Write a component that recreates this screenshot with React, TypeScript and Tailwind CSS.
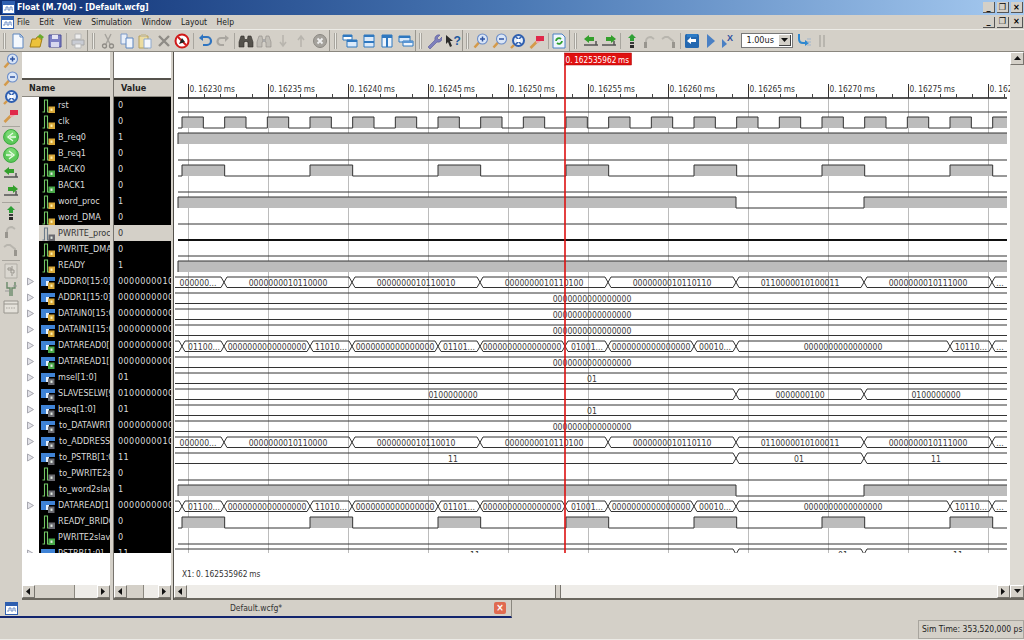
import React from "react";

const FONT = "font-['DejaVu_Sans_Condensed','DejaVu_Sans',sans-serif]";

type IconName = string;

function Icon({ n, dim }: { n: IconName; dim?: boolean }) {
  const c = { className: "w-4 h-4 shrink-0", viewBox: "0 0 16 16", fill: "none" } as const;
  switch (n) {
    case "new":
      return <svg {...c}><path d="M3 1h7l3 3v11H3z" fill="#f4f8fd" stroke="#5d86c0" /><path d="M10 1v3h3" stroke="#5d86c0" /></svg>;
    case "open":
      return <svg {...c}><path d="M1 14l2-8h4l1-2h3v2h2l-2 8z" fill="#ecc23c" stroke="#a37d14" /><path d="M8 4l3-3 4 3-3 3V5z" fill="#6aaa2c" /></svg>;
    case "save":
      return <svg {...c}><path d="M2 2h12v12H2z" fill="#7d80c4" stroke="#4a4d98" /><path d="M5 2h6v4H5z" fill="#e4e4f4" /><path d="M4 9h8v5H4z" fill="#d8d8ee" /></svg>;
    case "print":
      return <svg {...c}><path d="M5 1h6v5H5z" fill="#eee" stroke="#b8b8b8" /><path d="M2 7h12v5H2z" fill="#c9ccd4" stroke="#a8a8a8" /><path d="M5 11h6v4H5z" fill="#f2f2f2" stroke="#bbb" /></svg>;
    case "cut":
      return <svg {...c}><path d="M5 1l5 10M11 1L6 11" stroke="#a5a29c" strokeWidth="1.4" /><circle cx="4.5" cy="13" r="2" stroke="#8f8c86" strokeWidth="1.3" /><circle cx="11.5" cy="13" r="2" stroke="#8f8c86" strokeWidth="1.3" /></svg>;
    case "copy":
      return <svg {...c}><path d="M2 1h6v10H2z" fill="#e8eef8" stroke="#7c9ac8" /><path d="M7 5h7v10H7z" fill="#f2f6fc" stroke="#5d86c0" /></svg>;
    case "paste":
      return <svg {...c}><path d="M2 3h9v12H2z" fill="#ecdca0" stroke="#b59f5c" /><path d="M7 6h7v9H7z" fill="#f4f7fc" stroke="#8ea8cc" /><path d="M4 1h5v3H4z" fill="#c9c0a0" /></svg>;
    case "del":
      return <svg {...c}><path d="M3 3l10 10M13 3L3 13" stroke="#8f8c86" strokeWidth="2.4" /></svg>;
    case "stop":
      return <svg {...c}><circle cx="8" cy="8" r="6.5" fill="#fff" stroke="#d01a1a" strokeWidth="2" /><path d="M4 4l8 8" stroke="#d01a1a" strokeWidth="2" /><path d="M5 11l3-6 3 4z" fill="#222" /></svg>;
    case "undo":
      return <svg {...c}><path d="M5 4h5a3.5 3.5 0 010 8H6" stroke="#2f74c0" strokeWidth="2.2" /><path d="M6 1L2 5l4 3z" fill="#2f74c0" /></svg>;
    case "redo":
      return <svg {...c}><path d="M11 5H6a3.5 3.5 0 000 7h3" stroke="#a9a6a0" strokeWidth="2.2" /><path d="M10 2l4 3-4 4z" fill="#a9a6a0" /></svg>;
    case "bino":
      return <svg {...c}><path d="M3 3h3l1 6H6v5H1V9zM10 3h3l2 6v5h-5V9H9z" fill={dim ? "#c0bdb6" : "#55524c"} stroke={dim ? "#8f8c86" : "#33312d"} strokeWidth=".6" /><path d="M7 6h2v3H7z" fill={dim ? "#aaa" : "#55524c"} /></svg>;
    case "down":
      return <svg {...c}><path d="M8 2v10M5 9l3 4 3-4" stroke="#b8b5ae" strokeWidth="1.6" /></svg>;
    case "up":
      return <svg {...c}><path d="M8 14V4M5 7l3-4 3 4" stroke="#b8b5ae" strokeWidth="1.6" /></svg>;
    case "cx":
      return <svg {...c}><circle cx="8" cy="8" r="6.5" fill="#a5a29c" stroke="#8c8983" /><path d="M5.5 5.5l5 5M10.5 5.5l-5 5" stroke="#eee" strokeWidth="1.8" /></svg>;
    case "w1":
      return <svg {...c}><path d="M1 2h9v5H1z" fill="#fff" stroke="#2f78c0" /><path d="M1 2h9v2H1z" fill="#2f78c0" /><path d="M5 7h10v7H5z" fill="#dbeafa" stroke="#2f78c0" /><path d="M5 7h10v2H5z" fill="#2f78c0" /></svg>;
    case "w2":
      return <svg {...c}><path d="M3 2h10v12H3z" fill="#dbeafa" stroke="#2f78c0" /><path d="M3 2h10v2H3zM3 8h10v2H3z" fill="#2f78c0" /></svg>;
    case "w3":
      return <svg {...c}><path d="M3 2h10v12H3z" fill="#eef5fd" stroke="#2f78c0" /><path d="M3 2h10v3H3z" fill="#2f78c0" /><path d="M7 5h2v9H7z" fill="#2f78c0" /></svg>;
    case "w4":
      return <svg {...c}><path d="M1 3h11v6H1z" fill="#dbeafa" stroke="#2f78c0" /><path d="M1 3h11v2H1z" fill="#2f78c0" /><path d="M5 8h10v5H5z" fill="#eef5fd" stroke="#2f78c0" /><path d="M5 8h10v2H5z" fill="#5a96d4" /></svg>;
    case "wrench":
      return <svg {...c}><path d="M2 14l7-7a4 4 0 015-5l-3 3 2 2 3-3a4 4 0 01-5 5l-7 7z" fill="#7d7fbc" stroke="#565898" strokeWidth=".6" /></svg>;
    case "help":
      return <svg {...c}><path d="M1 2l7 6H5l2 5-2 1-2-5-2 2z" fill="#2a2a2a" /><text x="8.5" y="12" fontSize="12" fontWeight="700" fill="#1e5aa0" fontFamily="Liberation Sans">?</text></svg>;
    case "zin":
    case "zout":
      return <svg {...c}><path d="M1.5 14.5l4.5-5" stroke="#d49a4a" strokeWidth="2.6" /><circle cx="9.5" cy="6" r="5" fill="#dbe6f6" stroke="#6a8cc8" strokeWidth="1.1" /><path d="M7 6h5" stroke="#2f55a4" strokeWidth="1.5" />{n === "zin" && <path d="M9.5 3.5v5" stroke="#2f55a4" strokeWidth="1.5" />}</svg>;
    case "fit":
      return <svg {...c}><path d="M1 15l3-3" stroke="#d49a4a" strokeWidth="2.4" /><circle cx="8.5" cy="7.5" r="5.5" fill="#e4eefa" stroke="#2f5fb0" strokeWidth="2" /><path d="M5 3l3 3M12 3L9 6M5 12l3-3M12 12L9 9" stroke="#2f5fb0" strokeWidth="1.5" /><rect x="7" y="6" width="3" height="3" fill="#fff" /></svg>;
    case "mark":
      return <svg {...c}><path d="M1.5 15l6-6" stroke="#d49a4a" strokeWidth="2.6" /><path d="M7 3h8v5H7z" fill="#e0284a" /><path d="M7 8h5l-3 2H7z" fill="#f0a0a8" /></svg>;
    case "refresh":
      return <svg {...c}><path d="M2 1h9l3 3v11H2z" fill="#eef5fd" stroke="#4a82c4" /><path d="M5 8a3 3 0 015-2M11 8a3 3 0 01-5 2" stroke="#2fa02f" strokeWidth="1.8" /></svg>;
    case "gl":
    case "gr":
      return <svg {...c}>{n === "gl" ? <path d="M6 2L1 6l5 4V8h5V4H6z" fill="#34a02c" /> : <path d="M10 2l5 4-5 4V8H5V4h5z" fill="#34a02c" />}<path d="M1 12h14" stroke="#555" strokeWidth="1.5" /><path d="M13 8v4" stroke="#555" strokeWidth="1.5" /></svg>;
    case "pin":
      return <svg {...c}><path d="M8 1l4 4H10v3H6V5H4z" fill="#2fa036" /><path d="M6 9h4v2H6z" fill="#3a3a3a" /><path d="M6 12h4v3H6z" fill="#2a2a2a" /></svg>;
    case "a1":
      return <svg {...c}><path d="M4 15V8c0-3 3-4 5-4l3 2" stroke="#b8b5ae" strokeWidth="2" /><path d="M2 9h3v6H2z" fill="#98958e" /></svg>;
    case "a2":
      return <svg {...c}><path d="M1 6l3-2h3l5 4v3" stroke="#b8b5ae" strokeWidth="2" /><path d="M11 9h3v6h-3z" fill="#98958e" /></svg>;
    case "back":
      return <svg {...c}><rect x="1" y="1" width="14" height="14" rx="1.5" fill="#2468b0" /><path d="M3 1h10v3H3z" fill="#2c7cc8" /><path d="M7 4L3 8l4 3V9h5V6H7z" fill="#fff" /></svg>;
    case "play":
      return <svg {...c}><path d="M4 1l8 7-8 7z" fill="#4a80c4" /></svg>;
    case "playx":
      return <svg {...c}><path d="M1 6l5 5-5 4z" fill="#4a80c4" /><text x="6" y="8" fontSize="9" fontWeight="700" fill="#2f4fa0" fontFamily="Liberation Sans">X</text></svg>;
    case "redoB":
      return <svg {...c}><path d="M3 1v5c0 3 2 4 4 4h2" stroke="#2f88d0" strokeWidth="2" /><path d="M9 7l4 3-4 3z" fill="#2f88d0" /><path d="M11 6h4M11 9h4M11 12h4" stroke="#9fb4cc" /></svg>;
    case "pause":
      return <svg {...c}><path d="M5 2h2v12H5zM9 2h2v12H9z" fill="#b8b5ae" /></svg>;
    case "green1":
    case "green2":
      return <svg {...c}><circle cx="8" cy="8" r="7.4" fill="#5cc85a" stroke="#3aa83c" /><circle cx="8" cy="6" r="5" fill="#8ce282" opacity=".6" />{n === "green1" ? <path d="M10 4L5 8l5 4M13 8H7" stroke="#eafbe6" strokeWidth="1.3" /> : <path d="M6 4l5 4-5 4M3 8h6" stroke="#eafbe6" strokeWidth="1.3" />}</svg>;
    case "s1":
      return <svg {...c}><path d="M2 1h12v14H2z" fill="#dad7d0" stroke="#b0ada6" /><path d="M5 5h3v2H5zM8 7h3v3H8z" stroke="#98958e" /><path d="M9 3v4M9 11v2" stroke="#98958e" /></svg>;
    case "s2":
      return <svg {...c}><path d="M4 1v6h3v8M12 1v6H9v8" stroke="#6a8a6a" strokeWidth="1.4" /><path d="M2 10h4M10 5h4" stroke="#999" /></svg>;
    case "s3":
      return <svg {...c}><path d="M1 2h14v12H1z" fill="#e4e1da" stroke="#98958e" /><path d="M1 5h14" stroke="#98958e" /><path d="M3 9h10" stroke="#a8a59e" strokeDasharray="1.5 1" /></svg>;
    default:
      return <svg {...c} />;
  }
}

function Grip({ w }: { w: string }) {
  return (
    <div className={`flex items-center justify-center h-full border-l border-[#9a978f] ${w}`}>
      <div className="h-4 w-[3px] bg-[#ecebe6] border-x border-[#a8a59e]" />
    </div>
  );
}

function Sep({ w = "w-1" }: { w?: string }) {
  return (
    <div className={`flex justify-center ${w}`}>
      <div className="h-4 w-px bg-[#a8a59e]" />
    </div>
  );
}

function T({ n, dim }: { n: string; dim?: boolean }) {
  return (
    <div className="w-[18.5px] h-4 flex items-center justify-center shrink-0">
      <Icon n={n} dim={dim} />
    </div>
  );
}

function WinBtns() {
  return (
    <div className="flex gap-[2px]">
      {["_", "❐", "×"].map((g, i) => (
        <div key={i} className="w-[12px] h-[11px] bg-[#d4d0c8] border-r border-b border-[#555] flex items-center justify-center text-[9px] leading-none font-bold text-black">
          {g}
        </div>
      ))}
    </div>
  );
}

function AppGlyph() {
  return (
    <svg className="w-[13px] h-[13px] shrink-0" viewBox="0 0 13 13">
      <rect x=".5" y=".5" width="12" height="12" fill="#fff" stroke="#2f5fb0" />
      <rect x="1" y="1" width="11" height="3" fill="#2f5fb0" />
      <path d="M2 9h2V6h2v3h2V6h2v3h1" fill="none" stroke="#6f8fc8" />
    </svg>
  );
}

type Row = { name: string; value: string; bus?: boolean; badge: "y" | "g" | "c"; sel?: boolean; narrow?: boolean };

const ROWS: Row[] = [
  { name: "rst", value: "0", badge: "y" },
  { name: "clk", value: "0", badge: "y" },
  { name: "B_req0", value: "1", badge: "y" },
  { name: "B_req1", value: "0", badge: "y" },
  { name: "BACK0", value: "0", badge: "g" },
  { name: "BACK1", value: "0", badge: "g" },
  { name: "word_proc", value: "1", badge: "y" },
  { name: "word_DMA", value: "0", badge: "y" },
  { name: "PWRITE_proc", value: "0", badge: "c", sel: true },
  { name: "PWRITE_DMA", value: "0", badge: "y" },
  { name: "READY", value: "1", badge: "y" },
  { name: "ADDR0[15:0]", value: "0000000010110", bus: true, badge: "y" },
  { name: "ADDR1[15:0]", value: "0000000000000", bus: true, badge: "y" },
  { name: "DATAIN0[15:0]", value: "0000000000000", bus: true, badge: "y" },
  { name: "DATAIN1[15:0]", value: "0000000000000", bus: true, badge: "y" },
  { name: "DATAREAD0[15:0]", value: "0000000000000", bus: true, badge: "g" },
  { name: "DATAREAD1[15:0]", value: "0000000000000", bus: true, badge: "g" },
  { name: "msel[1:0]", value: "01", bus: true, badge: "c" },
  { name: "SLAVESELW[9:0]", value: "0100000000", bus: true, badge: "c" },
  { name: "breq[1:0]", value: "01", bus: true, badge: "c" },
  { name: "to_DATAWRITE[15:0]", value: "0000000000000", bus: true, badge: "c", narrow: true },
  { name: "to_ADDRESS[15:0]", value: "0000000010110", bus: true, badge: "c", narrow: true },
  { name: "to_PSTRB[1:0]", value: "11", bus: true, badge: "c", narrow: true },
  { name: "to_PWRITE2slave", value: "0", badge: "c", narrow: true },
  { name: "to_word2slave", value: "1", badge: "c", narrow: true },
  { name: "DATAREAD[15:0]", value: "0000000000000", bus: true, badge: "c" },
  { name: "READY_BRIDGE", value: "0", badge: "c" },
  { name: "PWRITE2slave", value: "0", badge: "g" },
  { name: "PSTRB[1:0]", value: "11", bus: true, badge: "c" },
];

function SigIcon({ bus, badge, sel }: { bus?: boolean; badge: Row["badge"]; sel?: boolean }) {
  const fill = badge === "y" ? "#d8a838" : badge === "g" ? "#48a848" : "#6a6a70";
  return (
    <svg className="w-[14px] h-[14px] shrink-0" viewBox="0 0 14 14">
      {bus ? (
        <>
          <path d="M0 2h5v9H0z" fill="#3f83d6" />
          <path d="M5 2h9v4H5z" fill="#3f83d6" />
          <path d="M5 6h3v5H5z" fill="#e8f2fc" />
        </>
      ) : (
        <path d="M1.5 13h2V1h3v12h2" fill="none" stroke={sel ? "#6a7a8a" : "#74c866"} strokeWidth="1.1" />
      )}
      <rect x={bus ? 7 : 7.5} y="7.5" width="6.5" height="6.5" fill={fill} />
      <rect x="9.5" y="9.5" width="2" height="2.4" fill={badge === "y" ? "#fff0b0" : "#dfe8df"} />
    </svg>
  );
}

function Tri({ dir }: { dir: "l" | "r" | "u" | "d" }) {
  const d = { l: "M6 1L2 4.5 6 8z", r: "M2 1l4 3.5L2 8z", u: "M1 6l3.5-4L8 6z", d: "M1 2l3.5 4L8 2z" }[dir];
  return (
    <svg className="w-[9px] h-[9px]" viewBox="0 0 9 9">
      <path d={d} fill="#111" />
    </svg>
  );
}

function SBtn({ dir, cls = "w-[13px]" }: { dir: "l" | "r" | "u" | "d"; cls?: string }) {
  return (
    <div className={`shrink-0 h-[13px] bg-[#d4d0c8] border-r border-b border-[#77746e] border-t-white border-l-white border-t border-l flex items-center justify-center ${cls}`}>
      <Tri dir={dir} />
    </div>
  );
}

function HScroll({ thumb }: { thumb: string }) {
  return (
    <div className="flex h-[13px] shrink-0 bg-[#eeece8]">
      <SBtn dir="l" />
      <div className={`h-[13px] bg-[#d4d0c8] border-r border-[#8a877f] ${thumb}`} />
      <div className="flex-1" />
      <SBtn dir="r" />
    </div>
  );
}

function Column({ w, title, titleCls, children }: { w: string; title: string; titleCls: string; children: React.ReactNode }) {
  return (
    <div className={`flex flex-col shrink-0 ${w}`}>
      <div className="h-[26px] bg-white" />
      <div className="h-[2px] bg-[#55524c]" />
      <div className={`h-[17px] pt-[1px] bg-[#d4d0c8] font-bold text-[9px] flex items-center text-[#222] border-b border-[#8a877f] ${titleCls}`}>{title}</div>
      <div className="h-[456px] overflow-hidden bg-white">{children}</div>
      <div className="h-[32px] bg-white" />
      <HScroll thumb={w === "w-[88px]" ? "w-[40px]" : "w-[17px]"} />
      <div className="h-[2px] bg-[#6a675f]" />
    </div>
  );
}

const P = 42.667;
const T0 = 182;
const GRID = Array.from({ length: 11 }, (_, i) => 188 + i * 80);
const X0 = 178;
const X1 = 1007;
const LINE = "#333";
const GRAY = "#bcbcbc";
const BACK = [0, 3, 6, 9, 12, 15, 18].map((k) => T0 + k * P);
const MONO = { fontFamily: "'DejaVu Sans Condensed','DejaVu Sans',sans-serif" };
const LABEL = { ...MONO, wordSpacing: "-0.7px" };

function Bit({ r, spans }: { r: number; spans: [number, number][] }) {
  const hi = 101 + r * 16;
  const lo = 112 + r * 16;
  let last = X0;
  let path = `M${X0} ${lo}`;
  spans.forEach(([a, b]) => {
    path += `H${a}V${hi}H${b}`;
    if (b < X1) path += `V${lo}`;
    last = b;
  });
  if (last < X1) path += `H${X1}`;
  return (
    <g>
      {spans.map(([a, b], i) => (
        <rect key={i} x={a} y={hi} width={b - a} height={lo - hi} fill={GRAY} />
      ))}
      <path d={path} fill="none" stroke={LINE} strokeWidth="1" />
    </g>
  );
}

function Bus({ r, cuts, labels }: { r: number; cuts: number[]; labels: { t: string; x: number }[] }) {
  const hi = 101 + r * 16;
  const lo = 111.5 + r * 16;
  const edges = [X0 - 6, ...cuts, X1 + 6];
  let d = "";
  for (let i = 0; i < edges.length - 1; i++) {
    const a = edges[i] + 3;
    const b = edges[i + 1] - 3;
    d += `M${a} ${hi}H${b}M${a} ${lo}H${b}`;
  }
  cuts.forEach((c) => {
    d += `M${c - 3} ${hi}L${c + 3} ${lo}M${c - 3} ${lo}L${c + 3} ${hi}`;
  });
  return (
    <g>
      <path d={d} fill="none" stroke={LINE} strokeWidth="1" />
      {labels.map((l, i) => (
        <text key={i} x={l.x} y={hi + 8.5} textAnchor="middle" fontSize="8.6" fill="#3a3a3a" style={MONO}>
          {l.t}
        </text>
      ))}
    </g>
  );
}

const Z16 = "0000000000000000";
const ADDR_CUTS = [224, 352, 480, 608, 736, 864, 992];
const ADDR_LABELS = [
  { t: "000000...", x: 198 },
  { t: "0000000010110000", x: 288 },
  { t: "0000000010110010", x: 416 },
  { t: "0000000010110100", x: 544 },
  { t: "0000000010110110", x: 672 },
  { t: "0110000010100011", x: 800 },
  { t: "0000000010111000", x: 928 },
  { t: "...", x: 1000 },
];
const READ_CUTS = [182, 224, 310, 352, 438, 480, 565, 608, 694, 736, 950, 992];
const READ_LABELS = [
  { t: "01100...", x: 204 },
  { t: Z16, x: 267 },
  { t: "11010...", x: 331 },
  { t: Z16, x: 395 },
  { t: "01101...", x: 459 },
  { t: Z16, x: 522 },
  { t: "01001...", x: 587 },
  { t: Z16, x: 651 },
  { t: "00010...", x: 715 },
  { t: Z16, x: 843 },
  { t: "10110...", x: 971 },
  { t: "...", x: 1000 },
];
const Mid = (r: number, t: string) => <Bus r={r} cuts={[]} labels={[{ t, x: 592 }]} />;
const backSpans: [number, number][] = BACK.map((b) => [b, b + P]);
const clkSpans: [number, number][] = Array.from({ length: 20 }, (_, k) => [T0 + k * P, Math.min(T0 + k * P + P / 2, X1)] as [number, number]);

function Wave() {
  const ticks = Array.from({ length: 52 }, (_, i) => 188 + i * 16).filter((x) => x < X1);
  return (
    <svg className="w-full h-[533px] block bg-white" viewBox="174 52 836 533">
      <defs>
        <clipPath id="rowsClip">
          <rect x="174" y="97" width="833" height="456" />
        </clipPath>
      </defs>
      <g clipPath="url(#rowsClip)">
        {GRID.map((x) => (
          <path key={x} d={`M${x + 0.5} 98V553`} stroke="#bcbcbc" />
        ))}
        <Bit r={0} spans={[]} />
        <Bit r={1} spans={clkSpans} />
        <Bit r={2} spans={[[X0, X1]]} />
        <Bit r={3} spans={[]} />
        <Bit r={4} spans={backSpans} />
        <Bit r={5} spans={[]} />
        <Bit r={6} spans={[[X0, 736], [864, X1]]} />
        <Bit r={7} spans={[]} />
        <path d={`M${X0} 240H${X1}`} stroke="#111" strokeWidth="2" />
        <Bit r={9} spans={[]} />
        <Bit r={10} spans={[[X0, X1]]} />
        <Bus r={11} cuts={ADDR_CUTS} labels={ADDR_LABELS} />
        {Mid(12, Z16)}
        {Mid(13, Z16)}
        {Mid(14, Z16)}
        <Bus r={15} cuts={READ_CUTS} labels={READ_LABELS} />
        {Mid(16, Z16)}
        {Mid(17, "01")}
        <Bus r={18} cuts={[736, 864]} labels={[{ t: "0100000000", x: 453 }, { t: "0000000100", x: 800 }, { t: "0100000000", x: 936 }]} />
        {Mid(19, "01")}
        {Mid(20, Z16)}
        <Bus r={21} cuts={ADDR_CUTS} labels={ADDR_LABELS} />
        <Bus r={22} cuts={[736, 864]} labels={[{ t: "11", x: 453 }, { t: "01", x: 799 }, { t: "11", x: 936 }]} />
        <Bit r={23} spans={[]} />
        <Bit r={24} spans={[[X0, 736], [864, X1]]} />
        <Bus r={25} cuts={READ_CUTS} labels={READ_LABELS} />
        <Bit r={26} spans={backSpans} />
        <Bit r={27} spans={[]} />
        <Bus r={28} cuts={[736, 864]} labels={[{ t: "11", x: 475 }, { t: "01", x: 843 }, { t: "11", x: 958 }]} />
      </g>
      <path d={`M178 98H${X1}`} stroke="#555" strokeWidth="2" />
      {ticks.map((x) => (
        <path key={x} d={`M${x + 0.5} 94V98`} stroke="#444" />
      ))}
      {GRID.map((x, i) => (
        <g key={x}>
          <path d={`M${x + 0.5} 84V98`} stroke="#333" />
          <text x={x + 1.5} y="91.5" fontSize="8.3" fill="#333" style={LABEL}>
            {i === 10 ? "0. 162" : `0. ${16230 + i * 5} ms`}
          </text>
        </g>
      ))}
      <path d="M565 65V553" stroke="#dd1111" strokeWidth="1.6" />
      <rect x="564.5" y="53" width="67" height="12" fill="#e01010" stroke="#a00" strokeWidth=".5" />
      <text x="565.5" y="62.5" fontSize="8.2" fill="#fff" style={LABEL}>0. 162535962 ms</text>
      <text x="182" y="577" fontSize="8.3" fill="#333" style={LABEL}>X1: 0. 162535962 ms</text>
    </svg>
  );
}

const SIDE: (string | null)[] = ["zin", "zout", "fit", "mark", null, "green1", "green2", "gl", "gr", null, "pin", "a1", "a2", null, "s1", "s2", "s3"];

export default function App() {
  return (
    <div className={`w-[1024px] h-[640px] overflow-hidden bg-[#d4d0c8] text-[#222] ${FONT} text-[9px]`}>
      <div className="h-[15px] bg-gradient-to-r from-[#0f2f74] via-[#4a78b4] to-[#a6caf0] flex items-center pl-[2px] pr-[1px] gap-[2px]">
        <AppGlyph />
        <span className="text-white font-bold text-[8.7px] leading-none">Float (M.70d) - [Default.wcfg]</span>
        <div className="flex-1" />
        <WinBtns />
      </div>
      <div className="h-[15px] flex items-center pl-[1px] pr-[1px] border-b border-[#ecebe6]">
        <AppGlyph />
        <div className="flex ml-[3px] gap-[9.5px] text-[8.5px]">
          {["File", "Edit", "View", "Simulation", "Window", "Layout", "Help"].map((m) => (
            <span key={m}>{m}</span>
          ))}
        </div>
        <div className="flex-1" />
        <WinBtns />
      </div>
      <div className="h-[22px] flex items-center border-b border-[#8a877f]">
        <div className="w-[9px] h-full flex items-center justify-center">
          <div className="h-4 w-[3px] bg-[#ecebe6] border-x border-[#a8a59e]" />
        </div>
        <T n="new" /><T n="open" /><T n="save" /><Sep /><T n="print" />
        <Grip w="w-[12px]" />
        <T n="cut" /><T n="copy" /><T n="paste" /><T n="del" /><T n="stop" /><Sep />
        <T n="undo" /><T n="redo" /><Sep />
        <T n="bino" /><T n="bino" dim /><T n="down" /><T n="up" /><T n="cx" />
        <Grip w="w-[12px]" />
        <T n="w1" /><T n="w2" /><T n="w3" /><T n="w4" />
        <Grip w="w-[10px]" />
        <T n="wrench" /><T n="help" />
        <Grip w="w-[10px]" />
        <T n="zin" /><T n="zout" /><T n="fit" /><T n="mark" /><Sep />
        <T n="refresh" />
        <Grip w="w-[13px]" />
        <T n="gl" /><T n="gr" /><Sep />
        <T n="pin" /><T n="a1" /><T n="a2" /><Sep w="w-[5px]" />
        <T n="back" /><T n="play" /><T n="playx" />
        <div className="ml-[2px] w-[52px] h-[15px] bg-white border border-[#777] flex items-center justify-between pl-[5px] pr-[1px] text-[9px]">
          <span>1.00us</span>
          <div className="w-[12px] h-[11px] bg-[#d4d0c8] border-r border-b border-[#444] flex items-center justify-center"><Tri dir="d" /></div>
        </div>
        <div className="ml-[2px]"><T n="redoB" /></div>
        <T n="pause" />
      </div>

      <div className="h-[548px] flex">
        <div className="w-[22px] shrink-0 flex flex-col items-center pt-[1px] gap-[2px]">
          {SIDE.map((s, i) =>
            s ? (
              <div key={i} className="h-4 flex items-center justify-center">
                <Icon n={s} />
              </div>
            ) : (
              <div key={i} className="w-[18px] h-px bg-[#a8a59e] my-[0.5px]" />
            ),
          )}
        </div>

        <Column w="w-[88px]" title="Name" titleCls="pl-[7px]">
          {ROWS.map((r) => (
            <div key={r.name} className="h-4 flex bg-white">
              <div className="w-[17px] shrink-0 flex items-center justify-center">
                {r.bus && (
                  <svg className="w-[9px] h-[9px]" viewBox="0 0 9 9">
                    <path d="M1.5 1l6 3.5-6 3.5z" fill="#e4e4ea" stroke="#a8a8b0" />
                  </svg>
                )}
              </div>
              <div className={`flex-1 min-w-0 flex items-center pl-[2px] pt-[1px] gap-[3px] overflow-hidden whitespace-nowrap ${r.sel ? "bg-[#d4d0c8] text-[#333]" : "bg-black text-[#dcdcdc]"}`}>
                <SigIcon bus={r.bus} badge={r.badge} sel={r.sel} />
                <span className={r.narrow ? "pl-[1px]" : ""}>{r.name}</span>
              </div>
            </div>
          ))}
        </Column>

        <div className="w-[4px] shrink-0 bg-[#d4d0c8] border-r border-[#77746e]" />

        <Column w="w-[57px]" title="Value" titleCls="pl-[7px]">
          {ROWS.map((r) => (
            <div key={r.name} className={`h-4 flex items-center pl-[4px] pt-[1px] overflow-hidden whitespace-nowrap tracking-[0.4px] ${r.sel ? "bg-[#d4d0c8] text-[#333]" : "bg-black text-[#dcdcdc]"}`}>
              {r.value}
            </div>
          ))}
        </Column>

        <div className="w-[3px] shrink-0 bg-[#d4d0c8] border-r border-[#55524c]" />

        <div className="flex-1 min-w-0 flex flex-col">
          <Wave />
          <div className="flex h-[13px] shrink-0 bg-[#eeece8]">
            <SBtn dir="l" />
            <div className="w-[368px]" />
            <div className="w-[6px] bg-[#d4d0c8] border-x border-[#77746e]" />
            <div className="flex-1" />
            <SBtn dir="r" />
          </div>
          <div className="h-[2px] bg-[#6a675f]" />
        </div>

        <div className="w-[14px] shrink-0 flex flex-col">
          <SBtn dir="u" cls="w-[14px]" />
          <div className="flex-1 bg-[#dedbd4]" />
          <SBtn dir="d" cls="w-[14px]" />
          <div className="h-[2px] bg-[#6a675f]" />
        </div>
      </div>

      <div className="h-[19px] flex">
        <div className="w-[512px] h-[18px] flex items-center border-r border-b-2 border-r-[#8a877f] border-b-[#12246e] pl-[5px] pr-[5px]">
          <AppGlyph />
          <div className="flex-1 text-center text-[#333] text-[8.5px]">Default.wcfg*</div>
          <div className="w-[12px] h-[12px] rounded-[2px] bg-[#e06a50] flex items-center justify-center text-white font-bold text-[10px] leading-none">×</div>
        </div>
      </div>
      <div className="h-[21px] flex justify-end items-end border-b border-[#ecebe6]">
        <div className="w-[106px] h-[19px] border border-[#a8a59e] flex items-center pl-[3px] whitespace-nowrap text-[#222] text-[8.5px]">Sim Time: 353,520,000 ps</div>
      </div>
    </div>
  );
}
